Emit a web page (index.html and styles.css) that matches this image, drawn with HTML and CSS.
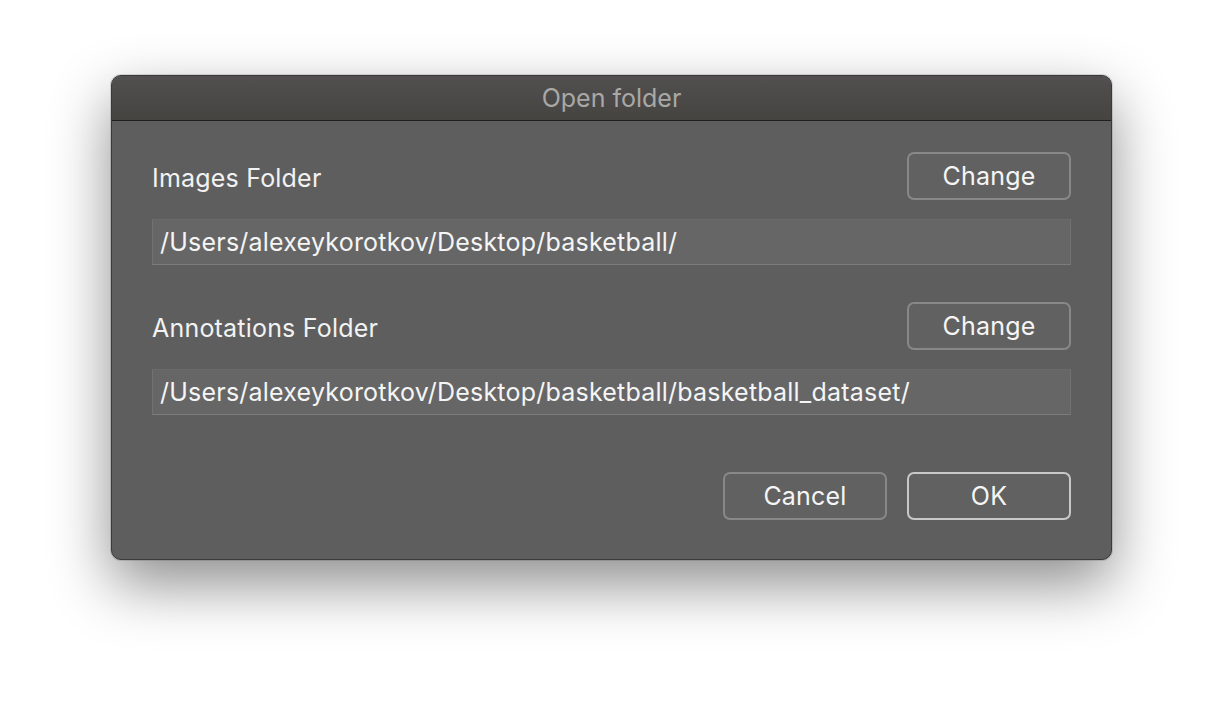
FILE: index.html
```html
<!DOCTYPE html>
<html>
<head>
<meta charset="utf-8">
<link rel="stylesheet" href="styles.css">
</head>
<body>
<div class="stage">
  <div class="window">
    <div class="titlebar">Open folder</div>
    <div class="content">
      <div class="row">
        <span class="label">Images Folder</span>
        <button class="btn">Change</button>
      </div>
      <div class="field">/Users/alexeykorotkov/Desktop/basketball/</div>
      <div class="row row2">
        <span class="label">Annotations Folder</span>
        <button class="btn">Change</button>
      </div>
      <div class="field">/Users/alexeykorotkov/Desktop/basketball/basketball_dataset/</div>
      <div class="actions">
        <button class="btn">Cancel</button>
        <button class="btn default">OK</button>
      </div>
    </div>
  </div>
</div>
</body>
</html>
```
FILE: styles.css
```css
* { box-sizing: border-box; }
html, body { margin: 0; padding: 0; background: #ffffff; }
body { width: 1224px; height: 708px; overflow: hidden; font-family: Inter, "Liberation Sans", sans-serif; }
.stage { padding: 75px 0 0 111px; }
.window {
  width: 1001px;
  height: 485px;
  border-radius: 10px;
  background: #5e5e5e;
  border: 1px solid #3a3a3a;
  box-shadow: 0 24px 60px rgba(0,0,0,0.45), 0 0 0 1px rgba(0,0,0,0.12);
  overflow: hidden;
  display: flex;
  flex-direction: column;
}
.titlebar {
  height: 45px;
  background: linear-gradient(#525050, #464440);
  border-bottom: 1px solid #1f1f1f;
  color: #a9a8a6;
  font-size: 25px;
  text-align: center;
  line-height: 44px;
  flex: none;
}
.content { padding: 31px 40px 0 40px; display: flex; flex-direction: column; }
.row { display: flex; justify-content: space-between; align-items: center; height: 48px; }
.row2 { margin-top: 37px; }
.label { color: #f2f2f2; font-size: 25px; padding-top: 4px; letter-spacing: 0.2px; }
.btn {
  width: 164px;
  height: 48px;
  border: 2px solid #888888;
  border-radius: 7px;
  background: #616161;
  color: #f5f5f5;
  font-family: inherit;
  font-size: 25px;
  letter-spacing: 0.2px;
  padding: 0;
}
.btn.default { border-color: #c8c8c8; }
.field {
  margin-top: 19px;
  height: 46px;
  width: 919px;
  background: #666666;
  border: 1px solid #727272;
  border-top-color: #6a6a6a;
  border-bottom-color: #7c7c7c;
  color: #f5f5f5;
  font-size: 25px;
  letter-spacing: 0.22px;
  line-height: 44px;
  padding-left: 7px;
}
.actions { display: flex; justify-content: flex-end; gap: 20px; margin-top: 57px; }
```
